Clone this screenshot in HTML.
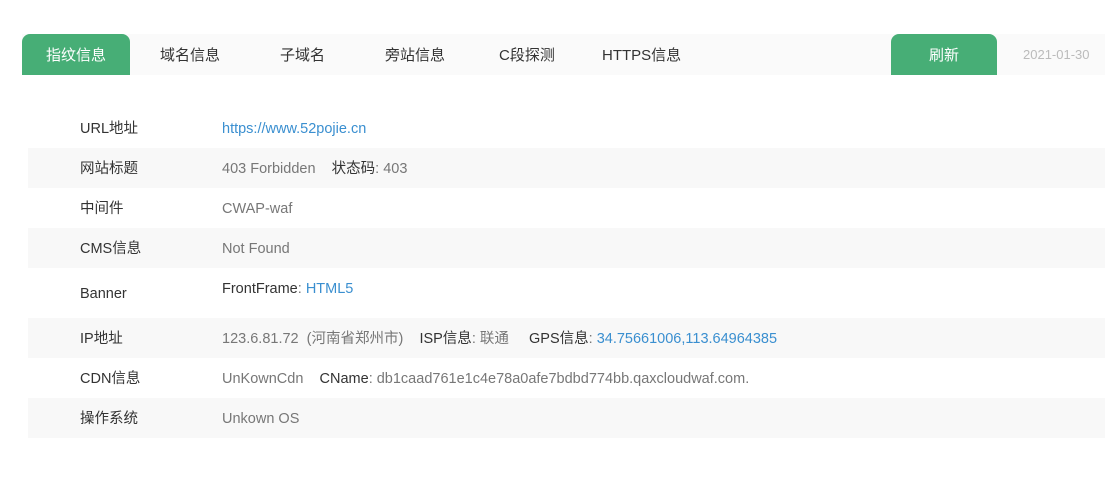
<!DOCTYPE html>
<html><head><meta charset="utf-8"><style>
body{margin:0;width:1119px;height:482px;background:#fff;font-family:"Liberation Sans","Noto Sans CJK SC",sans-serif;font-size:14.5px;line-height:20px;color:#333;position:relative;overflow:hidden}
.bar{position:absolute;left:22px;top:34px;width:1083px;height:41px;background:#fafafa}
.tab{position:absolute;top:34px;height:41px;line-height:42px;font-size:15px;color:#333}
.tab span{position:relative;top:1px}
.act{background:#47ae76;color:#fff;border-radius:8px 8px 0 0;text-align:center}
.row{position:absolute;left:28px;width:1077px;height:40px}
.s{background:#f8f8f8}
.l{position:absolute;left:80px;color:#333}
.v{position:absolute;left:222px;color:#777}
.b{color:#3a8fd0}
.k{color:#333}
</style></head><body>
<div class="bar"></div>
<div class="tab act" style="left:22px;width:108px"><span>指纹信息</span></div>
<div class="tab" style="left:160px"><span>域名信息</span></div>
<div class="tab" style="left:280px"><span>子域名</span></div>
<div class="tab" style="left:385px"><span>旁站信息</span></div>
<div class="tab" style="left:499px"><span>C段探测</span></div>
<div class="tab" style="left:602px"><span>HTTPS信息</span></div>
<div class="tab act" style="left:891px;width:106px"><span>刷新</span></div>
<div class="tab" style="left:1023px;font-size:13px;color:#bbb">2021-01-30</div>

<div class="row s" style="top:148px"></div>
<div class="row s" style="top:228px"></div>
<div class="row s" style="top:318px"></div>
<div class="row s" style="top:398px"></div>

<div class="l" style="top:119px">URL地址</div><div class="v b" style="top:119px">https://www.52pojie.cn</div>
<div class="l" style="top:159px">网站标题</div><div class="v" style="top:159px">403 Forbidden &nbsp;&nbsp; <span class="k">状态码</span>: 403</div>
<div class="l" style="top:199px">中间件</div><div class="v" style="top:199px">CWAP-waf</div>
<div class="l" style="top:239px">CMS信息</div><div class="v" style="top:239px">Not Found</div>
<div class="l" style="top:284px">Banner</div><div class="v" style="top:279px"><span class="k">FrontFrame</span>: <span class="b">HTML5</span></div>
<div class="l" style="top:329px">IP地址</div><div class="v" style="top:329px">123.6.81.72 &nbsp;(河南省郑州市) &nbsp;&nbsp;&nbsp;<span class="k">ISP信息</span>: 联通 &nbsp;&nbsp;&nbsp;&nbsp;<span class="k">GPS信息</span>: <span class="b">34.75661006,113.64964385</span></div>
<div class="l" style="top:369px">CDN信息</div><div class="v" style="top:369px">UnKownCdn &nbsp;&nbsp; <span class="k">CName</span>: db1caad761e1c4e78a0afe7bdbd774bb.qaxcloudwaf.com.</div>
<div class="l" style="top:409px">操作系统</div><div class="v" style="top:409px">Unkown OS</div>
</body></html>
